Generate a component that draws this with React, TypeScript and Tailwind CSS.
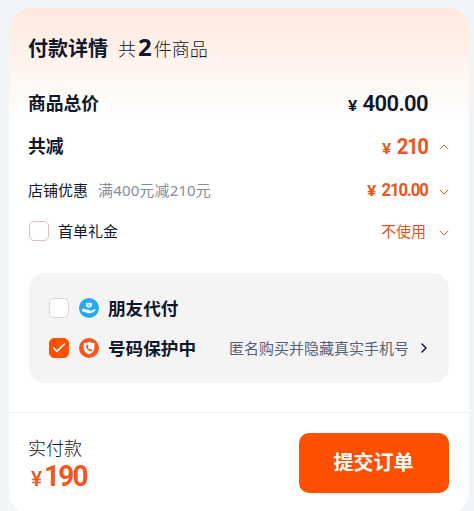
import { useState } from "react";
import { Check, ChevronDown, ChevronRight, ChevronUp } from "lucide-react";
import clsx from "clsx";

interface CheckboxProps {
    checked: boolean;
    warm?: boolean;
    label: string;
    onChange: (checked: boolean) => void;
}

function Checkbox({ checked, warm, label, onChange }: CheckboxProps) {
    return (
        <button
            type="button"
            role="checkbox"
            aria-checked={checked}
            aria-label={label}
            onClick={() => onChange(!checked)}
            className={clsx(
                "flex size-5 shrink-0 items-center justify-center rounded-[5px] border",
                checked ? "border-[#ff5000] bg-[#ff5000]" : "bg-white",
                !checked && (warm ? "border-[#d8c3bb]" : "border-[#d9d9dc]")
            )}
        >
            {checked && <Check className="size-4 shrink-0 text-white" strokeWidth={2.4} />}
        </button>
    );
}

function FriendPayIcon() {
    return (
        <svg viewBox="0 0 20 20" className="size-5 shrink-0">
            <circle cx="10" cy="10" r="10" fill="#25aaf0" />
            <path d="M7 4.200 8.500 5.200 10 4.600l1.500.6 1.500-1-.2 2.300.6.9-1.700 1.800L10 10 8.300 9.200 6.600 7.400l.6-.9Z" fill="#e9f8ff" />
            <path d="M8.600 6.400 10 7.500l1.400-1.100M10 7.500v1.500" fill="none" stroke="#25aaf0" strokeWidth=".6" />
            <path d="M3 11.200c1.700-.9 3.200-.6 4.500.5h2.700c1.200 0 1.200 1.500 0 1.500H8.300h3.200l3.600-1.900c1.200-.5 2 .5 1.100 1.300-2 1.900-3.700 2.700-6.200 2.700-2.400 0-3.800-1-5.400-1.700L3 13.600Z" fill="#fff" />
        </svg>
    );
}

function PhoneShieldIcon() {
    return (
        <svg viewBox="0 0 20 20" className="size-5 shrink-0">
            <circle cx="10" cy="10" r="10" fill="#f4571b" />
            <path d="M10 3.700c1.700 1 3.500 1.400 5.400 1.500v4.300c0 3.300-2.200 5.500-5.400 7-3.200-1.500-5.400-3.700-5.400-7V5.200C6.500 5.100 8.300 4.700 10 3.700Z" fill="#fff" />
            <path d="M7.300 6.900c.7-.7 1.300-.6 1.700.1l.5 1c.2.5-.5.9-.5 1.300.3 1 1 1.800 1.900 2.200.5.1.8-.7 1.300-.5l1 .6c.6.4.5 1-.2 1.500-2.700 1.500-7.100-3.600-5.700-6.200Z" fill="#e9652f" />
        </svg>
    );
}

export default function App() {
    const [giftMoney, setGiftMoney] = useState(false);
    const [friendPay, setFriendPay] = useState(false);
    const [protectNumber, setProtectNumber] = useState(true);

    return (
        <div className="h-[511px] w-[474px] overflow-hidden bg-[#f2f5f7] pt-2 pl-[9px] font-['Noto_Sans','Noto_Sans_CJK_SC',sans-serif] text-[#0f172b]">
            <main className="flex h-[506px] w-[460px] flex-col rounded-[22px] bg-white bg-linear-to-b from-[#ffe8dd] to-white to-[112px]">
                <div className="flex h-[405px] flex-col border-b border-[#eeeff1] px-5">
                    <header className="mt-[21px] -ml-px flex h-9 items-baseline leading-9">
                        <h1 className="text-[20px] font-bold">付款详情</h1>
                        <p className="ml-[10px] text-[18px] font-light">
                            共<span className="mx-[2px] text-[24px] font-bold">2</span>件商品
                        </p>
                    </header>

                    <div className="mt-6 flex h-7 items-center justify-between pr-[21px]">
                        <h2 className="-ml-px text-[17.8px] font-bold">商品总价</h2>
                        <p className="mt-[3px] flex items-baseline font-['Roboto','Noto_Sans_CJK_SC',sans-serif] leading-7">
                            <span className="mr-[5px] w-[10px] origin-left scale-x-115 text-[15px] font-semibold">¥</span>
                            <span className="text-[22px] font-semibold tracking-[-0.6px]">400.00</span>
                        </p>
                    </div>

                    <div className="mt-[15px] flex h-7 items-center justify-between">
                        <h2 className="-ml-px text-[17.8px] font-bold">共减</h2>
                        <div className="flex items-center text-[#e9571d]">
                            <p className="mt-[3px] flex items-baseline font-['Roboto','Noto_Sans_CJK_SC',sans-serif] leading-7">
                                <span className="mr-[2px] w-[10px] origin-left scale-x-115 text-[15px] font-semibold">¥</span>
                                <span className="origin-right scale-x-92 text-[22px] font-bold tracking-[-1.4px]">210</span>
                            </p>
                            <ChevronUp className="mt-[2px] ml-2 size-4 -mr-[3px]" strokeWidth={1.4} />
                        </div>
                    </div>

                    <div className="mt-[18px] flex h-6 items-center justify-between">
                        <p className="-ml-px text-[15px]">
                            店铺优惠<span className="ml-[10px] tracking-[0.15px] text-[#888d9d]">满400元减210元</span>
                        </p>
                        <div className="flex items-center text-[#e9571d]">
                            <p className="flex items-baseline font-['Roboto','Noto_Sans_CJK_SC',sans-serif] leading-6">
                                <span className="mr-[1px] w-[10px] origin-left scale-x-115 text-[15px] font-bold">¥</span>
                                <span className="origin-right scale-x-93 text-[18px] font-bold tracking-[-1.2px]">210.00</span>
                            </p>
                            <ChevronDown className="mt-[3px] ml-2 size-4 -mr-[3px]" strokeWidth={1.4} />
                        </div>
                    </div>

                    <div className="mt-[17px] flex h-6 items-center">
                        <Checkbox warm label="首单礼金" checked={giftMoney} onChange={setGiftMoney} />
                        <span className="ml-[9px] text-[15px]">首单礼金</span>
                        <span className="ml-auto text-[15px] text-[#dc551f]">不使用</span>
                        <ChevronDown className="mt-[3px] ml-[10px] size-4 -mr-[3px] text-[#e9571d]" strokeWidth={1.4} />
                    </div>

                    <section className="mt-[30px] flex h-[110px] flex-col gap-4 rounded-2xl bg-[#f4f4f5] px-5 pt-[23px]">
                        <div className="flex h-6 items-center">
                            <Checkbox label="朋友代付" checked={friendPay} onChange={setFriendPay} />
                            <span className="mr-[9px] ml-[10px]"><FriendPayIcon /></span>
                            <h2 className="text-[17.6px] font-bold">朋友代付</h2>
                        </div>
                        <div className="flex h-6 items-center">
                            <Checkbox label="号码保护中" checked={protectNumber} onChange={setProtectNumber} />
                            <span className="mr-[9px] ml-[10px]"><PhoneShieldIcon /></span>
                            <h2 className="text-[17.6px] font-bold">号码保护中</h2>
                            <span className="ml-auto text-[15px] text-[#57607a]">匿名购买并隐藏真实手机号</span>
                            <ChevronRight className="-mr-[3px] ml-[7px] size-4" strokeWidth={2.2} />
                        </div>
                    </section>
                </div>

                <footer className="flex px-5 pt-5">
                    <div>
                        <p className="mt-[3px] -ml-px text-[18px] leading-6 font-light">实付款</p>
                        <p className="ml-[2px] flex items-baseline font-['Roboto','Noto_Sans_CJK_SC',sans-serif] leading-8 text-[#f0571a]">
                            <span className="text-[21px] font-medium">¥</span>
                            <span className="ml-[2px] origin-left scale-x-93 text-[30px] font-bold tracking-[-1.9px]">190</span>
                        </p>
                    </div>
                    <button type="button" className="ml-auto h-[60px] w-[150px] rounded-[10px] bg-[#ff5000] pr-px text-[20px] font-bold text-white">
                        提交订单
                    </button>
                </footer>
            </main>
        </div>
    );
}
